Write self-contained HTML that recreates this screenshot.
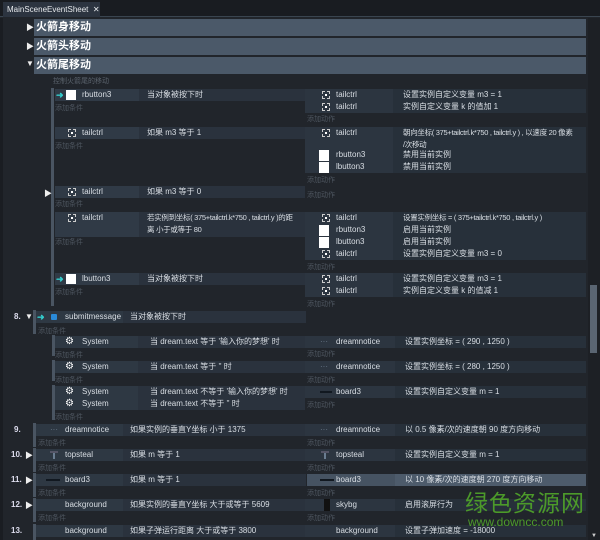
<!DOCTYPE html>
<html><head><meta charset="utf-8"><style>
*{margin:0;padding:0;box-sizing:border-box}
body{width:600px;height:540px;background:#21252b;overflow:hidden;position:relative;font-family:"Liberation Sans","Noto Sans CJK SC",sans-serif;color:#d9dee4;font-size:8px}
.a{position:absolute}
.tabbar{left:0;top:0;width:600px;height:17px;background:#191c21;border-bottom:1px solid #3a4550}
.tab{left:3px;top:2px;width:97px;height:15px;background:#2c3440;font-size:8px;line-height:15px;padding-left:4px;color:#e6e9ec}
.hd{left:34px;width:552px;height:17px;background:#4b5969;font-weight:bold;font-size:11px;line-height:17px;padding-left:2px;color:#fff}
.tri{font-size:8px;color:#eee}
.r{position:absolute;height:12px;line-height:12px;white-space:nowrap}
.r span{position:absolute;top:0}
.add{position:absolute;font-size:7px;color:#4e5660;line-height:9px}
.bar{position:absolute;width:3px;background:#4a5562}
.sq{position:absolute;width:10px;height:10px;background:#fff;top:1px}
.tc{position:absolute;top:2px;width:8px;height:8px;border:1px dashed #ccc}
.tc::after{content:"";position:absolute;left:2px;top:2px;width:2px;height:2px;background:#fff}
.ar{position:absolute;color:#3cc;font-size:9px;top:0;font-weight:bold}
.num{position:absolute;font-size:8px;font-weight:bold;color:#dde}
.gear{position:absolute;top:0;font-size:10px;color:#fff}
.ln{position:absolute;top:5px;height:2px;background:#111820}
.sm{letter-spacing:-0.3px;font-size:7.5px}
</style></head><body>
<div class="a tabbar"></div>
<div class="a tab">MainSceneEventSheet&nbsp;&nbsp;✕</div>
<div class="a" style="left:0;top:18px;width:3px;height:522px;background:#1a1d22"></div>

<div class="a tri" style="left:26px;top:22px">▶</div>
<div class="a hd" style="top:19px">火箭身移动</div>
<div class="a tri" style="left:26px;top:41px">▶</div>
<div class="a hd" style="top:38px">火箭头移动</div>
<div class="a tri" style="left:26px;top:59px">▼</div>
<div class="a hd" style="top:57px">火箭尾移动</div>
<div class="add" style="left:53px;top:77px;color:#5a626c">控制火箭尾的移动</div>

<div class="bar" style="left:51px;top:88px;height:38px"></div>
<div class="bar" style="left:51px;top:126px;height:180px"></div>

<div class="r" style="left:55px;top:89px;width:250px;background:linear-gradient(90deg,#303a46 0 84px,#2a323d 84px)"><span class="ar" style="left:1px">➜</span><i class="sq" style="left:11px"></i><span style="left:27px">rbutton3</span><span style="left:92px">当对象被按下时</span></div>
<div class="add" style="left:55px;top:104px">添加条件</div>
<div class="r" style="left:55px;top:127px;width:250px;background:linear-gradient(90deg,#303a46 0 84px,#2a323d 84px)"><i class="tc" style="left:13px"></i><span style="left:27px">tailctrl</span><span style="left:92px">如果 m3 等于 1</span></div>
<div class="add" style="left:55px;top:142px">添加条件</div>
<div class="a tri" style="left:44px;top:188px">▶</div>
<div class="r" style="left:55px;top:186px;width:250px;background:linear-gradient(90deg,#303a46 0 84px,#2a323d 84px)"><i class="tc" style="left:13px"></i><span style="left:27px">tailctrl</span><span style="left:92px">如果 m3 等于 0</span></div>
<div class="add" style="left:55px;top:200px">添加条件</div>
<div class="r" style="left:55px;top:212px;width:250px;height:25px;background:linear-gradient(90deg,#303a46 0 84px,#2a323d 84px)"><i class="tc" style="left:13px"></i><span style="left:27px">tailctrl</span><span class="sm" style="left:92px;line-height:12px">若实例到坐标( 375+tailctrl.k*750 , tailctrl.y )的距<br>离 小于或等于 80</span></div>
<div class="add" style="left:55px;top:238px">添加条件</div>
<div class="r" style="left:55px;top:273px;width:250px;background:linear-gradient(90deg,#303a46 0 84px,#2a323d 84px)"><span class="ar" style="left:1px">➜</span><i class="sq" style="left:11px"></i><span style="left:27px">lbutton3</span><span style="left:92px">当对象被按下时</span></div>
<div class="add" style="left:55px;top:288px">添加条件</div>

<div class="r" style="left:305px;top:89px;width:281px;background:linear-gradient(90deg,#2c3540 0 88px,#27303a 88px)"><i class="tc" style="left:17px"></i><span style="left:31px">tailctrl</span><span style="left:98px">设置实例自定义变量 m3 = 1</span></div>
<div class="r" style="left:305px;top:101px;width:281px;background:linear-gradient(90deg,#2c3540 0 88px,#27303a 88px)"><i class="tc" style="left:17px"></i><span style="left:31px">tailctrl</span><span style="left:98px">实例自定义变量 k 的值加 1</span></div>
<div class="add" style="left:307px;top:115px">添加动作</div>
<div class="r" style="left:305px;top:127px;width:281px;height:22px;background:linear-gradient(90deg,#2c3540 0 88px,#27303a 88px)"><i class="tc" style="left:17px"></i><span style="left:31px">tailctrl</span><span class="sm" style="left:98px">朝向坐标( 375+tailctrl.k*750 , tailctrl.y ) , 以速度 20 像素<br>/次移动</span></div>
<div class="r" style="left:305px;top:149px;width:281px;background:linear-gradient(90deg,#2c3540 0 88px,#27303a 88px)"><i class="sq" style="left:14px;height:11px"></i><span style="left:31px">rbutton3</span><span style="left:98px">禁用当前实例</span></div>
<div class="r" style="left:305px;top:161px;width:281px;background:linear-gradient(90deg,#2c3540 0 88px,#27303a 88px)"><i class="sq" style="left:14px;height:11px"></i><span style="left:31px">lbutton3</span><span style="left:98px">禁用当前实例</span></div>
<div class="add" style="left:307px;top:176px">添加动作</div>
<div class="add" style="left:307px;top:191px">添加动作</div>
<div class="r" style="left:305px;top:212px;width:281px;background:linear-gradient(90deg,#2c3540 0 88px,#27303a 88px)"><i class="tc" style="left:17px"></i><span style="left:31px">tailctrl</span><span class="sm" style="left:98px">设置实例坐标 = ( 375+tailctrl.k*750 , tailctrl.y )</span></div>
<div class="r" style="left:305px;top:224px;width:281px;background:linear-gradient(90deg,#2c3540 0 88px,#27303a 88px)"><i class="sq" style="left:14px;height:11px"></i><span style="left:31px">rbutton3</span><span style="left:98px">启用当前实例</span></div>
<div class="r" style="left:305px;top:236px;width:281px;background:linear-gradient(90deg,#2c3540 0 88px,#27303a 88px)"><i class="sq" style="left:14px;height:11px"></i><span style="left:31px">lbutton3</span><span style="left:98px">启用当前实例</span></div>
<div class="r" style="left:305px;top:248px;width:281px;background:linear-gradient(90deg,#2c3540 0 88px,#27303a 88px)"><i class="tc" style="left:17px"></i><span style="left:31px">tailctrl</span><span style="left:98px">设置实例自定义变量 m3 = 0</span></div>
<div class="add" style="left:307px;top:263px">添加动作</div>
<div class="r" style="left:305px;top:273px;width:281px;background:linear-gradient(90deg,#2c3540 0 88px,#27303a 88px)"><i class="tc" style="left:17px"></i><span style="left:31px">tailctrl</span><span style="left:98px">设置实例自定义变量 m3 = 1</span></div>
<div class="r" style="left:305px;top:285px;width:281px;background:linear-gradient(90deg,#2c3540 0 88px,#27303a 88px)"><i class="tc" style="left:17px"></i><span style="left:31px">tailctrl</span><span style="left:98px">实例自定义变量 k 的值减 1</span></div>
<div class="add" style="left:307px;top:300px">添加动作</div>

<div class="num" style="left:14px;top:312px">8.</div>
<div class="a tri" style="left:25px;top:312px">▼</div>
<div class="bar" style="left:33px;top:310px;height:24px"></div>
<div class="r" style="left:36px;top:311px;width:270px;background:linear-gradient(90deg,#2e3843 0 87px,#2a323d 87px)"><span class="ar" style="left:1px">➜</span><i class="a" style="left:15px;top:3px;width:6px;height:6px;background:#2a8ad8;border-radius:1px"></i><span style="left:29px">submitmessage</span><span style="left:94px">当对象被按下时</span></div>
<div class="add" style="left:38px;top:327px">添加条件</div>
<div class="bar" style="left:52px;top:335px;height:21px"></div>
<div class="r" style="left:55px;top:336px;width:250px;background:linear-gradient(90deg,#2e3843 0 83px,#2a323d 83px)"><span class="gear" style="left:10px">⚙</span><span style="left:27px">System</span><span style="left:95px">当 dream.text 等于 '输入你的梦想' 时</span></div>
<div class="add" style="left:55px;top:351px">添加条件</div>
<div class="bar" style="left:52px;top:360px;height:21px"></div>
<div class="r" style="left:55px;top:361px;width:250px;background:linear-gradient(90deg,#2e3843 0 83px,#2a323d 83px)"><span class="gear" style="left:10px">⚙</span><span style="left:27px">System</span><span style="left:95px">当 dream.text 等于 '' 时</span></div>
<div class="add" style="left:55px;top:376px">添加条件</div>
<div class="bar" style="left:52px;top:385px;height:35px"></div>
<div class="r" style="left:55px;top:386px;width:250px;background:linear-gradient(90deg,#2e3843 0 83px,#2a323d 83px)"><span class="gear" style="left:10px">⚙</span><span style="left:27px">System</span><span style="left:95px">当 dream.text 不等于 '输入你的梦想' 时</span></div>
<div class="r" style="left:55px;top:398px;width:250px;background:linear-gradient(90deg,#2e3843 0 83px,#2a323d 83px)"><span class="gear" style="left:10px">⚙</span><span style="left:27px">System</span><span style="left:95px">当 dream.text 不等于 '' 时</span></div>
<div class="add" style="left:55px;top:413px">添加条件</div>

<div class="r" style="left:305px;top:336px;width:281px;background:linear-gradient(90deg,#2c3540 0 90px,#27303a 90px)"><span style="left:15px;color:#6a7a8a">···</span><span style="left:31px">dreamnotice</span><span style="left:100px">设置实例坐标 = ( 290 , 1250 )</span></div>
<div class="add" style="left:307px;top:350px">添加动作</div>
<div class="r" style="left:305px;top:361px;width:281px;background:linear-gradient(90deg,#2c3540 0 90px,#27303a 90px)"><span style="left:15px;color:#6a7a8a">···</span><span style="left:31px">dreamnotice</span><span style="left:100px">设置实例坐标 = ( 280 , 1250 )</span></div>
<div class="add" style="left:307px;top:376px">添加动作</div>
<div class="r" style="left:305px;top:386px;width:281px;background:linear-gradient(90deg,#2c3540 0 90px,#27303a 90px)"><i class="ln" style="left:15px;width:12px"></i><span style="left:31px">board3</span><span style="left:100px">设置实例自定义变量 m = 1</span></div>
<div class="add" style="left:307px;top:401px">添加动作</div>

<div class="num" style="left:14px;top:425px">9.</div>
<div class="bar" style="left:33px;top:423px;height:24px"></div>
<div class="r" style="left:36px;top:424px;width:270px;background:linear-gradient(90deg,#2e3843 0 87px,#2a323d 87px)"><span style="left:14px;color:#6a7a8a">···</span><span style="left:29px">dreamnotice</span><span style="left:94px">如果实例的垂直Y坐标 小于 1375</span></div>
<div class="add" style="left:38px;top:439px">添加条件</div>
<div class="r" style="left:305px;top:424px;width:281px;background:linear-gradient(90deg,#2c3540 0 90px,#27303a 90px)"><span style="left:15px;color:#6a7a8a">···</span><span style="left:31px">dreamnotice</span><span style="left:100px">以 0.5 像素/次的速度朝 90 度方向移动</span></div>
<div class="add" style="left:307px;top:439px">添加动作</div>

<div class="num" style="left:11px;top:450px">10.</div><div class="a tri" style="left:25px;top:450px">▶</div>
<div class="bar" style="left:33px;top:448px;height:24px"></div>
<div class="r" style="left:36px;top:449px;width:270px;background:linear-gradient(90deg,#2e3843 0 87px,#2a323d 87px)"><i class="a" style="left:14px;top:2px;width:8px;height:8px;border-top:2px solid #556;background:linear-gradient(90deg,transparent 3px,#6a7c90 3px 5px,transparent 5px)"></i><span style="left:29px">topsteal</span><span style="left:94px">如果 m 等于 1</span></div>
<div class="add" style="left:38px;top:464px">添加条件</div>
<div class="r" style="left:305px;top:449px;width:281px;background:linear-gradient(90deg,#2c3540 0 90px,#27303a 90px)"><i class="a" style="left:16px;top:2px;width:8px;height:8px;border-top:2px solid #556;background:linear-gradient(90deg,transparent 3px,#6a7c90 3px 5px,transparent 5px)"></i><span style="left:31px">topsteal</span><span style="left:100px">设置实例自定义变量 m = 1</span></div>
<div class="add" style="left:307px;top:464px">添加动作</div>

<div class="num" style="left:11px;top:475px">11.</div><div class="a tri" style="left:25px;top:475px">▶</div>
<div class="bar" style="left:33px;top:473px;height:24px"></div>
<div class="r" style="left:36px;top:474px;width:270px;background:linear-gradient(90deg,#2e3843 0 87px,#2a323d 87px)"><i class="ln" style="left:10px;width:14px"></i><span style="left:29px">board3</span><span style="left:94px">如果 m 等于 1</span></div>
<div class="add" style="left:38px;top:489px">添加条件</div>
<div class="r" style="left:307px;top:474px;width:279px;background:linear-gradient(90deg,#465362 0 88px,#4d5b6b 88px)"><i class="ln" style="left:13px;width:14px"></i><span style="left:29px">board3</span><span style="left:98px">以 10 像素/次的速度朝 270 度方向移动</span></div>
<div class="add" style="left:307px;top:489px">添加动作</div>

<div class="num" style="left:11px;top:500px">12.</div><div class="a tri" style="left:25px;top:500px">▶</div>
<div class="bar" style="left:33px;top:498px;height:24px"></div>
<div class="r" style="left:36px;top:499px;width:270px;background:linear-gradient(90deg,#2e3843 0 87px,#2a323d 87px)"><span style="left:29px">background</span><span style="left:94px">如果实例的垂直Y坐标 大于或等于 5609</span></div>
<div class="add" style="left:38px;top:514px">添加条件</div>
<div class="r" style="left:305px;top:499px;width:281px;background:linear-gradient(90deg,#2c3540 0 90px,#27303a 90px)"><i class="a" style="left:19px;top:0;width:6px;height:12px;background:#111"></i><span style="left:31px">skybg</span><span style="left:100px">启用滚屏行为</span></div>
<div class="add" style="left:307px;top:514px">添加动作</div>

<div class="num" style="left:11px;top:526px">13.</div>
<div class="bar" style="left:33px;top:524px;height:16px"></div>
<div class="r" style="left:36px;top:525px;width:270px;background:linear-gradient(90deg,#2e3843 0 87px,#2a323d 87px)"><span style="left:29px">background</span><span style="left:94px">如果子弹运行距离 大于或等于 3800</span></div>
<div class="r" style="left:305px;top:525px;width:281px;background:linear-gradient(90deg,#2c3540 0 90px,#27303a 90px)"><span style="left:31px">background</span><span style="left:100px">设置子弹加速度 = -18000</span></div>

<div class="a" style="left:588px;top:18px;width:12px;height:522px;background:#1d2025"></div>
<div class="a" style="left:590px;top:285px;width:7px;height:68px;background:#5a6572"></div>
<div class="a" style="left:591px;top:533px;font-size:6px;color:#ccc">▼</div>

<div class="a" style="left:465px;top:488px;font-size:23px;line-height:26px;color:#4c9a2a;font-family:'Noto Sans CJK SC',sans-serif;letter-spacing:1px">绿色资源网</div>
<div class="a" style="left:468px;top:515px;font-size:12px;line-height:14px;color:#4c9a2a">www.downcc.com</div>
</body></html>
